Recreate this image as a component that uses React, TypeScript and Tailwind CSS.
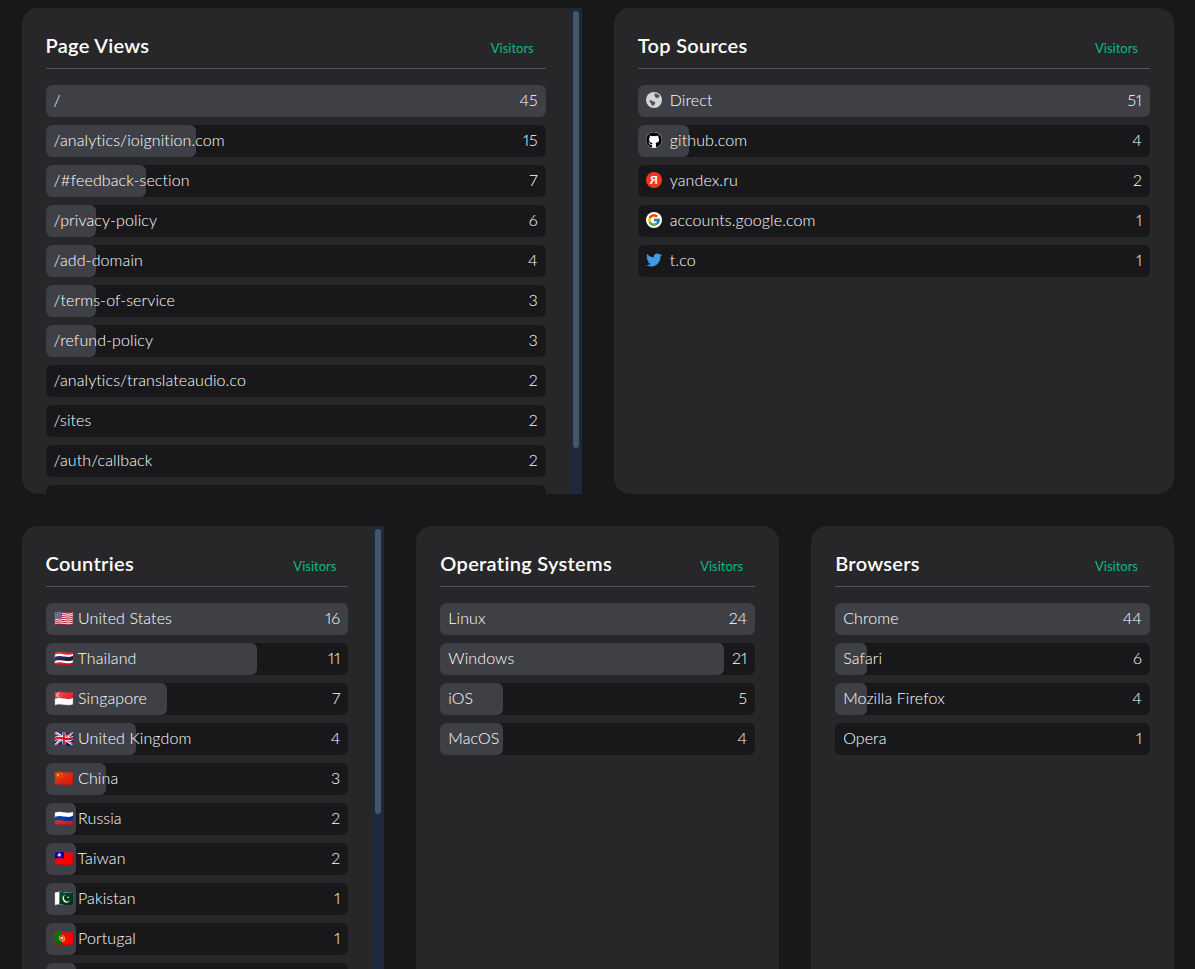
import { FaGithub, FaTwitter } from "react-icons/fa";
import { FcGoogle } from "react-icons/fc";
import type { ReactNode } from "react";

type Row = { label: string; value: number; icon?: ReactNode };

function GlobeIcon() {
  return (
    <svg viewBox="0 0 16 16" className="size-4">
      <circle cx="8" cy="8" r="8" fill="#d4d4d8" />
      <path d="M9 1.5c1.6-.4 3.4.6 4.4 2.2.3.8-.2 1.6-1 1.7-.7.1-1 .8-1.7.7-.9-.1-1.2-1-1.7-1.6C8.400 3.800 8.200 2 9 1.500z" fill="#52525b" />
      <path d="M3.500 8.500c1-.6 2-.2 2.700.5.800.6 1.800.5 2.600 1 .7.500.5 1.500 0 2.100-.6.800-1 1.700-2 1.700-1.300-.2-1.500-1.600-2-2.500-.4-.8-1.700-1.800-1.300-2.800z" fill="#52525b" />
    </svg>
  );
}

// the last row of a scrolling card is cut off by the card edge, its text is out of view
const pages: Row[] = [
  { label: "/", value: 45 },
  { label: "/analytics/ioignition.com", value: 15 },
  { label: "/#feedback-section", value: 7 },
  { label: "/privacy-policy", value: 6 },
  { label: "/add-domain", value: 4 },
  { label: "/terms-of-service", value: 3 },
  { label: "/refund-policy", value: 3 },
  { label: "/analytics/translateaudio.co", value: 2 },
  { label: "/sites", value: 2 },
  { label: "/auth/callback", value: 2 },
  { label: "", value: 2 },
];

const sources: Row[] = [
  { label: "Direct", value: 51, icon: <GlobeIcon /> },
  {
    label: "github.com",
    value: 4,
    icon: (
      <span className="flex size-4 items-center justify-center rounded-full bg-white">
        <FaGithub className="size-4 text-black" />
      </span>
    ),
  },
  {
    label: "yandex.ru",
    value: 2,
    icon: (
      <span className="flex size-4 items-center justify-center rounded-full bg-[#f2371f] text-xs font-bold leading-none text-white">
        Я
      </span>
    ),
  },
  {
    label: "accounts.google.com",
    value: 1,
    icon: (
      <span className="flex size-4 items-center justify-center rounded-full bg-white">
        <FcGoogle className="size-[14px]" />
      </span>
    ),
  },
  { label: "t.co", value: 1, icon: <FaTwitter className="size-4 text-[#3d9be9]" /> },
];

const countries: Row[] = [
  { label: "🇺🇸 United States", value: 16 },
  { label: "🇹🇭 Thailand", value: 11 },
  { label: "🇸🇬 Singapore", value: 7 },
  { label: "🇬🇧 United Kingdom", value: 4 },
  { label: "🇨🇳 China", value: 3 },
  { label: "🇷🇺 Russia", value: 2 },
  { label: "🇹🇼 Taiwan", value: 2 },
  { label: "🇵🇰 Pakistan", value: 1 },
  { label: "🇵🇹 Portugal", value: 1 },
  { label: "", value: 1 },
];

const systems: Row[] = [
  { label: "Linux", value: 24 },
  { label: "Windows", value: 21 },
  { label: "iOS", value: 5 },
  { label: "MacOS", value: 4 },
];

const browsers: Row[] = [
  { label: "Chrome", value: 44 },
  { label: "Safari", value: 6 },
  { label: "Mozilla Firefox", value: 4 },
  { label: "Opera", value: 1 },
];

function StatCard({ title, rows, thumb }: { title: string; rows: Row[]; thumb?: number }) {
  const max = Math.max(...rows.map((r) => r.value));
  return (
    <div className="flex h-[486px] rounded-2xl bg-[#27272a]">
      <div className="min-w-0 flex-1 overflow-hidden rounded-l-2xl p-6">
        <div className="flex items-center justify-between border-b border-[#52525b] pb-2">
          <h2 className="pb-[2px] text-xl font-semibold leading-[26px] tracking-[0.3px] text-white">{title}</h2>
          <span className="pr-3 pt-[6px] text-[13px] text-[#10b981]">Visitors</span>
        </div>
        <ul className="mt-4 flex flex-col gap-2">
          {rows.map((row, i) => (
            <li key={i} className="relative flex h-8 items-center justify-between rounded-md bg-[#18181b] px-2 pb-[2px] font-light tracking-[0.1px] proportional-nums text-white">
              <div
                className="absolute inset-y-0 left-0 rounded-md bg-[#3f3f46]"
                style={{ width: `${Math.round((row.value / max) * 10) * 10}%` }}
              />
              <span className="relative flex items-center gap-2 truncate">
                {row.icon}
                {row.label}
              </span>
              {row.label && <span className="relative">{row.value}</span>}
            </li>
          ))}
        </ul>
      </div>
      {thumb && (
        <div className="w-3 shrink-0 bg-[#1e293b] pt-[3px]">
          <div className="mx-auto w-1.5 rounded-full bg-[#475569]" style={{ height: thumb }} />
        </div>
      )}
    </div>
  );
}

export default function App() {
  return (
    <div className="h-screen overflow-hidden bg-[#18181b] pl-[21.5px] pr-[21px] pt-2 font-['Lato',sans-serif]">
      <div className="grid grid-cols-2 gap-8">
        <StatCard title="Page Views" rows={pages} thumb={437} />
        <StatCard title="Top Sources" rows={sources} />
      </div>
      <div className="mt-8 grid grid-cols-3 gap-8">
        <StatCard title="Countries" rows={countries} thumb={285} />
        <StatCard title="Operating Systems" rows={systems} />
        <StatCard title="Browsers" rows={browsers} />
      </div>
    </div>
  );
}
